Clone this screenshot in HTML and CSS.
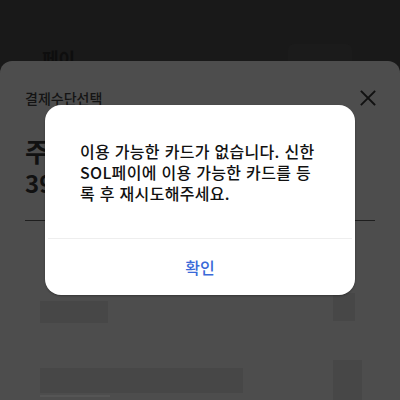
FILE: index.html
```html
<!DOCTYPE html>
<html lang="ko">
<head>
<meta charset="utf-8">
<link rel="stylesheet" href="styles.css">
</head>
<body>
<div class="top">
  <div class="top-title">페이</div>
  <div class="top-box"></div>
</div>
<div class="sheet">
  <div class="sheet-head">
    <div class="sheet-title">결제수단선택</div>
    <svg class="close" width="16" height="16" viewBox="0 0 16 16"><path d="M1.5 1.5L14.5 14.5M14.5 1.5L1.5 14.5" stroke="#111" stroke-width="1.8" fill="none" stroke-linecap="square"/></svg>
  </div>
  <div class="summary">
    <div class="sum-label">주문 금액</div>
    <div class="sum-value">39,800원</div>
  </div>
  <div class="sk-row sk-row1">
    <div class="sk sk-a"></div>
    <div class="sk sk-b"></div>
  </div>
  <div class="sk-row sk-row2">
    <div class="sk-col">
      <div class="sk sk-c"></div>
      <div class="sk-line"></div>
    </div>
    <div class="sk sk-d"></div>
  </div>
</div>
<div class="dialog">
  <div class="msg">이용 가능한 카드가 없습니다. 신한 SOL페이에 이용 가능한 카드를 등록 후 재시도해주세요.</div>
  <div class="btn">확인</div>
</div>
</body>
</html>
```
FILE: styles.css
```css
html, body {
  margin: 0;
  padding: 0;
}
body {
  width: 400px;
  height: 400px;
  overflow: hidden;
  background: #191919;
  font-family: "Noto Sans CJK KR", "Noto Sans", sans-serif;
  color: #111;
  position: relative;
}
.top {
  height: 61px;
  overflow: hidden;
  display: flex;
  justify-content: space-between;
  align-items: flex-start;
  padding: 0 48px 0 42px;
}
.top-title {
  margin-top: 46px;
  font-size: 18px;
  line-height: 24px;
  font-weight: 700;
  color: #0e0e0e;
}
.top-box {
  margin-top: 44px;
  width: 64px;
  height: 30px;
  border-radius: 6px;
  background: #1b1b1b;
}
.sheet {
  height: 339px;
  background: #4d4d4d;
  border-radius: 12px 12px 0 0;
  padding: 0 25px;
}
.sheet-head {
  display: flex;
  justify-content: space-between;
  align-items: center;
  padding-top: 27px;
}
.sheet-title {
  font-size: 14px;
  line-height: 20px;
  font-weight: 500;
  color: #141414;
}
.close {
  display: block;
  margin-right: -1px;
}
.summary {
  margin-top: 26px;
  padding-bottom: 22px;
  border-bottom: 1px solid #1e1e1e;
}
.sum-label {
  font-size: 26px;
  line-height: 34px;
  font-weight: 700;
}
.sum-value {
  font-size: 24px;
  line-height: 30px;
  font-weight: 700;
}
.sk-row {
  display: flex;
  justify-content: space-between;
  padding: 0 0 0 15px;
}
.sk {
  background: #474747;
}
.sk-row1 {
  margin-top: 72px;
  align-items: flex-start;
  padding-right: 20px;
}
.sk-a {
  width: 68px;
  height: 22px;
  margin-top: 8px;
}
.sk-b {
  width: 22px;
  height: 28px;
}
.sk-row2 {
  margin-top: 37px;
  padding-right: 13px;
}
.sk-col {
  display: flex;
  flex-direction: column;
}
.sk-c {
  width: 203px;
  height: 25px;
  margin-top: 8px;
}
.sk-line {
  width: 70px;
  height: 2px;
  margin-top: 2px;
  background: #555;
}
.sk-d {
  width: 29px;
  height: 40px;
}
.dialog {
  position: absolute;
  left: 45px;
  top: 105px;
  width: 310px;
  height: 190px;
  background: #fff;
  border-radius: 16px;
  display: flex;
  flex-direction: column;
  box-shadow: 0 1px 2px rgba(0,0,0,0.3);
}
.msg {
  flex: 1;
  padding: 36px 35px 0 35px;
  font-size: 16px;
  line-height: 21px;
  letter-spacing: 0.3px;
  font-weight: 500;
  color: #111;
}
.btn {
  height: 56px;
  margin: 0 3px;
  border-top: 1px solid #eeeeee;
  display: flex;
  align-items: center;
  justify-content: center;
  font-size: 16px;
  font-weight: 500;
  color: #3a6ad8;
}
```
